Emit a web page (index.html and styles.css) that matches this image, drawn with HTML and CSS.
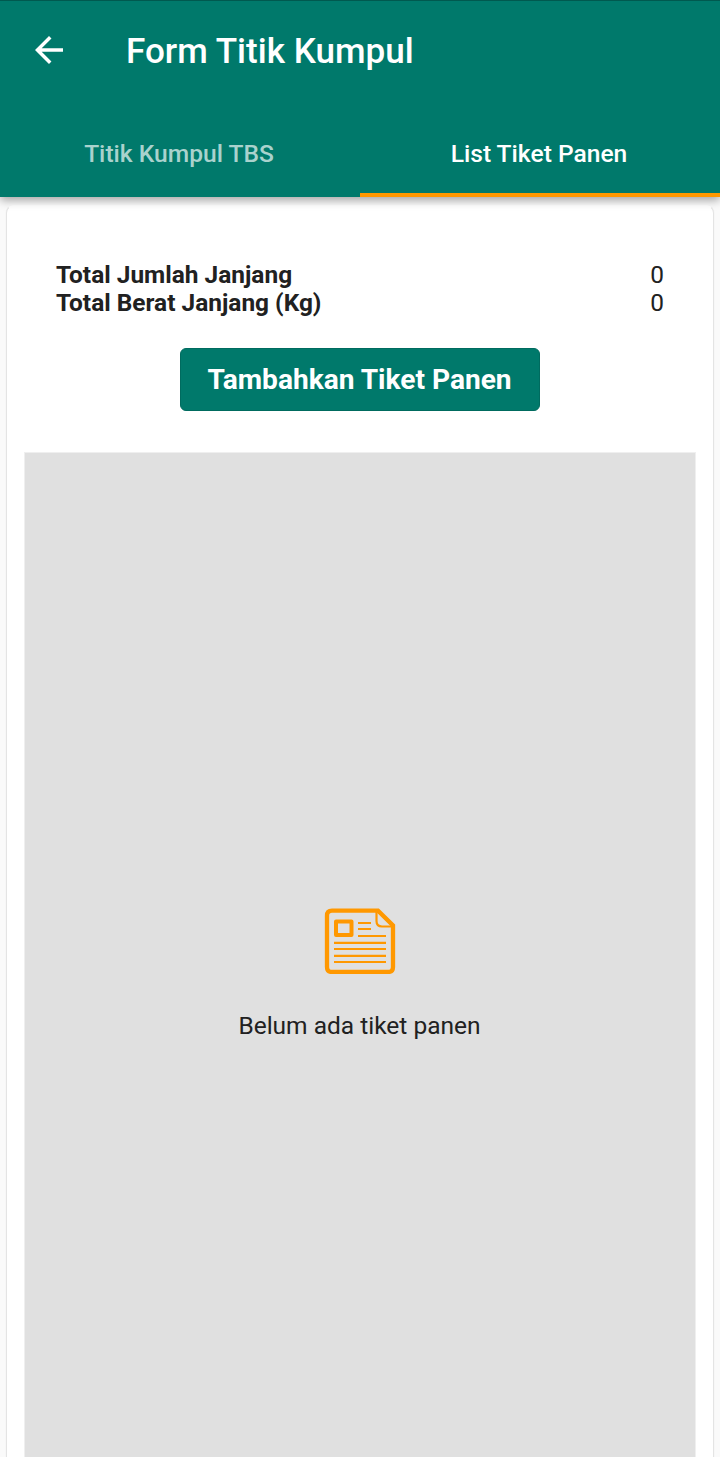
FILE: index.html
```html
<!DOCTYPE html>
<html lang="id">
<head>
<meta charset="utf-8">
<title>Form Titik Kumpul</title>
<link rel="stylesheet" href="styles.css">
</head>
<body>
<header class="app-bar">
  <div class="toolbar">
    <svg class="back" viewBox="4 4 16 16"><path fill="currentColor" d="M20 11H7.83l5.59-5.59L12 4l-8 8 8 8 1.41-1.41L7.83 13H20v-2z"/></svg>
    <h1 class="title">Form Titik Kumpul</h1>
  </div>
  <nav class="tabs">
    <a class="tab">Titik Kumpul TBS</a>
    <a class="tab active">List Tiket Panen</a>
  </nav>
</header>
<main class="card">
  <dl class="totals">
    <div class="row"><dt>Total Jumlah Janjang</dt><dd>0</dd></div>
    <div class="row"><dt>Total Berat Janjang (Kg)</dt><dd>0</dd></div>
  </dl>
  <button class="add">Tambahkan Tiket Panen</button>
  <section class="empty">
    <svg class="doc" viewBox="0 0 72 66" fill="none" stroke="#ff9800">
      <path stroke-width="4.300" d="M8 2.700H54L69 17.500V59Q69 64 64 64H8Q3 64 3 59V7.700Q3 2.700 8 2.700Z"/>
      <path stroke-width="2.200" d="M52.500 3V13Q52.500 18.500 58 18.500H69M34 15H47M34 21H47M34 28H62M10 34.800H62M10 41H62M10 47.800H62M10 54H62"/>
      <rect x="12" y="13.500" width="15.500" height="13.500" stroke-width="4" stroke-linejoin="round"/>
    </svg>
    <p class="message">Belum ada tiket panen</p>
  </section>
</main>
</body>
</html>
```
FILE: styles.css
```css
* { box-sizing: border-box; margin: 0; padding: 0; }
body { height: 1457px; overflow: hidden; display: flex; flex-direction: column; background: #fafafa; color: #212121; font-family: Roboto, sans-serif; }
.app-bar { position: relative; z-index: 1; flex: none; height: 197px; background: #00796b; border-top: 1px solid #00594f; color: #fff; box-shadow: 0 3px 9px rgba(0,0,0,.36); display: flex; flex-direction: column; }
.toolbar { height: 98px; display: flex; align-items: center; padding-left: 35px; }
.back { width: 28px; height: 28px; margin-right: 63px; }
.title { padding-top: 1px; font-size: 35.100px; font-weight: 500; line-height: 42px; }
.tabs { flex: 1; display: flex; }
.tab { flex: 1; display: flex; align-items: center; justify-content: center; padding: 14px 2px 0 0; font-size: 24.600px; font-weight: 500; color: #a9d2cd; border-bottom: 4px solid transparent; }
.tab.active { color: #fff; border-color: #ff9800; }
.card { flex: none; height: 1300px; margin: 8px 6px 0; padding: 55px 17px 0; background: #fff; border: 1px solid #e4e4e4; border-top-color: #fff; border-radius: 8px; box-shadow: 0 1px 2px rgba(0,0,0,.06); display: flex; flex-direction: column; }
.totals { padding: 0 32px; font-size: 24.450px; line-height: 28px; }
.row { display: flex; justify-content: space-between; }
.row dt { font-weight: 700; }
.add { align-self: center; width: 360px; height: 63px; margin: 30.500px 0 0; padding: 1px 1px 0 0; background: #00796b; border: 1px solid #006b5f; border-radius: 6px; color: #fff; font: 700 28.100px Roboto, sans-serif; }
.empty { flex: 1; margin-top: 41.500px; padding-top: 455px; background: #e0e0e0; border: 1px solid #efefef; display: flex; flex-direction: column; align-items: center; }
.doc { width: 72px; height: 66px; }
.message { margin: 38px 1px 0 0; font-size: 24.500px; line-height: 28px; }
```
